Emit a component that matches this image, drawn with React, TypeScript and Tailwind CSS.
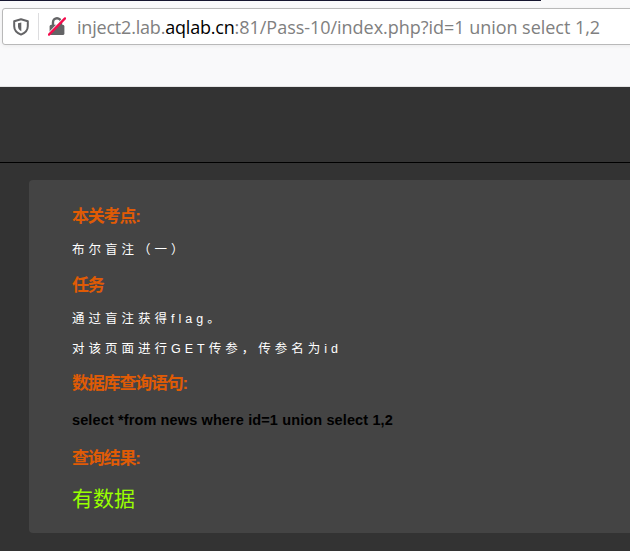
import type { ReactNode } from "react";

function ShieldIcon() {
  return (
    <svg className="h-[18px] w-4 shrink-0" viewBox="0 0 16 18" fill="none">
      <path
        d="M8 1.2 14.8 3.2V8.2C14.8 12.4 12.2 14.9 8 16.6 3.8 14.9 1.2 12.4 1.2 8.2V3.2Z"
        stroke="#646466"
        strokeWidth="2"
        strokeLinejoin="round"
      />
      <path d="M8.3 4.4V13.2C6.2 12.2 5 10.8 5 8.3V5.2Z" fill="#646466" />
    </svg>
  );
}

function InsecureLockIcon() {
  return (
    <svg className="h-[19px] w-[18px] shrink-0" viewBox="0 0 18 19" fill="none">
      <path d="M5 9V5.2a4 4 0 0 1 8 0V9" stroke="#646466" strokeWidth="2.4" />
      <rect x="1.6" y="7.8" width="14.8" height="10.2" rx="1.6" fill="#646466" />
      <path d="M0 17.6 16.2 1" stroke="#fff" strokeWidth="2.4" />
      <path d="M1 17.6 17 1.4" stroke="#f50b4c" strokeWidth="2.3" strokeLinecap="round" />
    </svg>
  );
}

function Heading({ children }: { children: ReactNode }) {
  return (
    <h3 className="h-6 text-[17px] leading-6 font-bold tracking-[-1.2px] text-[#e05b05]">
      {children}
    </h3>
  );
}

function Note({ children }: { children: ReactNode }) {
  return <p className="h-5 text-[12.5px] leading-5 tracking-[4px] text-white">{children}</p>;
}

export default function App() {
  return (
    <div className="flex h-[551px] w-[630px] flex-col overflow-hidden bg-[#333] font-['Liberation_Sans','Noto_Sans_CJK_SC',sans-serif] whitespace-nowrap">
      <header className="h-[87px] shrink-0 border-b border-[#e4e4e4] bg-[#f9f9fa]">
        <div className="h-px w-[541px] bg-[#15152f]" />
        <div className="mt-[7px] ml-[2px] flex h-[37px] w-[640px] items-center rounded-[3px] border border-[#b9b9b9] bg-white pl-[10px] shadow-[0_1px_4px_rgba(0,0,0,0.06)]">
          <ShieldIcon />
          <div className="ml-[9px] h-[27px] w-px bg-[#dddddf]" />
          <div className="ml-[9px]">
            <InsecureLockIcon />
          </div>
          <div className="ml-[11px] font-['Open_Sans',sans-serif] text-[18px] leading-6 tracking-[-0.2px] text-[#808080]">
            inject2.lab.<span className="text-black">aqlab.cn</span>
            <span className="tracking-[-0.03px]">:81/Pass-10/index.php?id=1 union select 1,2</span>
          </div>
        </div>
      </header>
      <div className="h-[76px] shrink-0 border-b border-black" />
      <main className="mt-[17px] ml-[29px] h-[353px] w-[640px] rounded-[4px] bg-[#444] pt-[25px] pl-[43px]">
        <Heading>本关考点:</Heading>
        <div className="mt-[11px]">
          <Note>布尔盲注（一）</Note>
        </div>
        <div className="mt-[14px]">
          <Heading>任务</Heading>
        </div>
        <div className="mt-[11px] flex flex-col gap-[10px]">
          <Note>通过盲注获得flag。</Note>
          <Note>对该页面进行GET传参，传参名为id</Note>
        </div>
        <div className="mt-[13px]">
          <Heading>数据库查询语句:</Heading>
        </div>
        <p className="mt-[14px] h-5 text-[14.5px] leading-5 font-bold tracking-[0.12px] text-black">
          select *from news where id=1 union select 1,2
        </p>
        <div className="mt-[17px]">
          <Heading>查询结果:</Heading>
        </div>
        <p className="mt-[14px] h-7 text-[21px] leading-7 text-[#99ff00]">有数据</p>
      </main>
    </div>
  );
}
